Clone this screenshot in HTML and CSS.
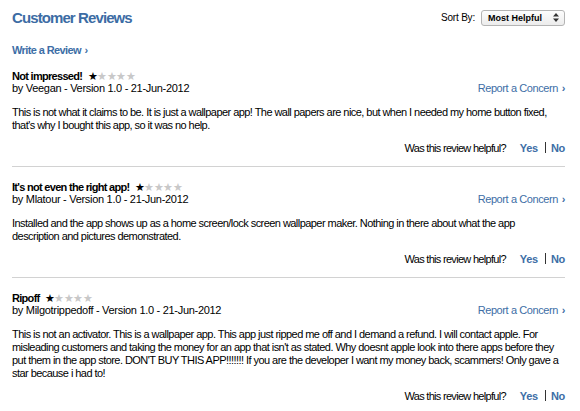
FILE: index.html
```html
<!DOCTYPE html>
<html lang="en">
<head>
  <meta charset="UTF-8">
  <title>Customer Reviews</title>
  <link rel="stylesheet" href="styles.css">
</head>
<body>

<div class="reviews">
  <div class="header">
    <h1>Customer Reviews</h1>
    <div class="sort">
      <span>Sort By:</span>
      <div class="select">
        <span>Most Helpful</span>
        <svg width="6" height="9" viewBox="0 0 6 9"><path d="M3 0 L6 3.5 H0 Z M3 9 L6 5.5 H0 Z" fill="#333"/></svg>
      </div>
    </div>
  </div>

  <a class="write" href="#">Write a Review <span class="chev">&#8250;</span></a>

  <div class="review">
    <div class="title">Not impressed! <span class="stars"><b>&#9733;</b>&#9733;&#9733;&#9733;&#9733;</span></div>
    <div class="meta">
      <span>by Veegan - Version 1.0 - 21-Jun-2012</span>
      <a href="#">Report a Concern <span class="chev">&#8250;</span></a>
    </div>
    <p>This is not what it claims to be. It is just a wallpaper app! The wall papers are nice, but when I needed my home button fixed, that's why I bought this app, so it was no help.</p>
    <div class="helpful">Was this review helpful? <a href="#">Yes</a><span class="sep"></span><a href="#">No</a></div>
  </div>

  <div class="review">
    <div class="title">It's not even the right app! <span class="stars"><b>&#9733;</b>&#9733;&#9733;&#9733;&#9733;</span></div>
    <div class="meta">
      <span>by Mlatour - Version 1.0 - 21-Jun-2012</span>
      <a href="#">Report a Concern <span class="chev">&#8250;</span></a>
    </div>
    <p>Installed and the app shows up as a home screen/lock screen wallpaper maker. Nothing in there about what the app<br>description and pictures demonstrated.</p>
    <div class="helpful">Was this review helpful? <a href="#">Yes</a><span class="sep"></span><a href="#">No</a></div>
  </div>

  <div class="review">
    <div class="title">Ripoff <span class="stars"><b>&#9733;</b>&#9733;&#9733;&#9733;&#9733;</span></div>
    <div class="meta">
      <span>by Milgotrippedoff - Version 1.0 - 21-Jun-2012</span>
      <a href="#">Report a Concern <span class="chev">&#8250;</span></a>
    </div>
    <p>This is not an activator. This is a wallpaper app. This app just ripped me off and I demand a refund. I will contact apple. For misleading customers and taking the money for an app that isn't as stated. Why doesnt apple look into there apps before they put them in the app store. DON'T BUY THIS APP!!!!!!! If you are the developer I want my money back, scammers! Only gave a star because i had to!</p>
    <div class="helpful">Was this review helpful? <a href="#">Yes</a><span class="sep"></span><a href="#">No</a></div>
  </div>
</div>

</body>
</html>
```

FILE: styles.css
```css
/* Basic styling */
* { box-sizing: border-box; margin: 0; padding: 0; }
body { font-family: "Liberation Sans", Arial, sans-serif; font-size: 11px; color: #000; background: #fff; letter-spacing: -0.3px; }
a { color: #3d6ea6; text-decoration: none; }
.reviews { padding: 6px 15px 0 12px; }

.header { display: flex; justify-content: space-between; align-items: center; height: 22px; }
h1 { font-size: 15px; font-weight: bold; color: #3c6ca4; letter-spacing: -0.9px; }
.sort { display: flex; align-items: center; gap: 6px; font-size: 10px; letter-spacing: -0.2px; margin-top: 1px; }
.select { display: flex; align-items: center; justify-content: space-between; width: 84px; height: 16px; padding: 0 5px 0 6px; border: 1px solid #b4b4b4; border-radius: 3px; background: linear-gradient(#fdfdfd, #ececec); font-size: 9px; font-weight: bold; letter-spacing: 0; }

.write { display: block; margin-top: 16px; font-weight: bold; font-size: 11px; line-height: 12px; letter-spacing: -0.6px; }
.chev { font-weight: bold; margin-left: 1px; }

.review { padding: 14px 0 12px; border-bottom: 1px solid #d2d2d2; }
.review:last-child { border-bottom: none; }
.title { display: flex; align-items: center; height: 12px; font-weight: bold; font-size: 11px; letter-spacing: -0.7px; white-space: pre; }
.stars { display: inline-flex; align-items: center; height: 12px; line-height: 12px; font-size: 11px; color: #c8c8c8; letter-spacing: -0.5px; font-weight: normal; margin-left: 3px; }
.stars b { color: #000; font-weight: normal; }
.meta { display: flex; justify-content: space-between; align-items: center; height: 12px; }
.meta a { letter-spacing: -0.4px; }
.review p { margin-top: 12px; line-height: 13px; letter-spacing: -0.55px; }
.helpful { display: flex; justify-content: flex-end; align-items: center; height: 13px; margin-top: 9px; letter-spacing: -0.7px; }
.helpful a { font-weight: bold; margin-left: 14px; letter-spacing: -0.3px; }
.helpful .sep { width: 1px; height: 11px; background: #333; margin-left: 7px; }
.helpful .sep + a { margin-left: 5px; }
```
